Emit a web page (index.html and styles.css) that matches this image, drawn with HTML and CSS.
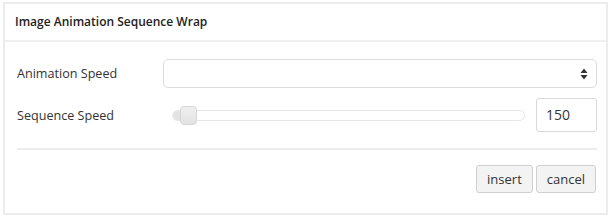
FILE: index.html
```html
<!DOCTYPE html>
<html lang="en">
<head>
    <meta charset="UTF-8">
    <title>Image Animation Sequence Wrap</title>
    <link rel="stylesheet" href="styles.css">
</head>
<body>

    <div class="dialog">
        <div class="dialog-header">Image Animation Sequence Wrap</div>

        <div class="dialog-body">
            <div class="form-row">
                <label class="form-label">Animation Speed</label>
                <div class="select-box">
                    <svg class="select-arrows" width="8" height="12" viewBox="0 0 8 12">
                        <path d="M4 0.5 L7.5 5 L0.5 5 Z" fill="#333"/>
                        <path d="M4 11.5 L7.5 7 L0.5 7 Z" fill="#333"/>
                    </svg>
                </div>
            </div>

            <div class="form-row">
                <label class="form-label">Sequence Speed</label>
                <div class="slider">
                    <div class="slider-track">
                        <div class="slider-fill"></div>
                        <div class="slider-thumb"></div>
                    </div>
                </div>
                <div class="number-box">150</div>
            </div>

            <hr class="divider">

            <div class="button-row">
                <button class="btn">insert</button>
                <button class="btn">cancel</button>
            </div>
        </div>
    </div>

</body>
</html>
```

FILE: styles.css
```css
/* General Styles */
body {
    margin: 0;
    padding: 0;
    background: #ffffff;
    font-family: 'Open Sans', 'Liberation Sans', sans-serif;
    color: #333;
}

.dialog {
    margin: 2px 5px 0 3px;
    width: 601px;
    border: 2px solid #ececec;
    background: #fff;
}

.dialog-header {
    height: 36px;
    line-height: 36px;
    padding-left: 10px;
    font-size: 12px;
    font-weight: 600;
    color: #222;
    border-bottom: 2px solid #f0f0f0;
}

.dialog-body {
    padding: 17px 9px 20px 12px;
}

.form-row {
    display: flex;
    align-items: center;
    margin-bottom: 10px;
}

.form-label {
    width: 146px;
    flex-shrink: 0;
    font-size: 12.6px;
}

.select-box {
    flex: 1;
    height: 27px;
    border: 1px solid #dcdcdc;
    border-radius: 5px;
    display: flex;
    align-items: center;
    justify-content: flex-end;
    padding-right: 8px;
}

.select-arrows {
    display: block;
}

/* Slider */
.slider {
    flex: 1;
    padding: 0 11px 0 9px;
}

.slider-track {
    position: relative;
    height: 9px;
    border: 1px solid #e6e6e6;
    border-radius: 6px;
    background: #fff;
}

.slider-fill {
    width: 16px;
    height: 100%;
    border-radius: 6px 0 0 6px;
    background: #e3e3e3;
}

.slider-thumb {
    position: absolute;
    left: 7px;
    top: -5px;
    width: 15px;
    height: 17px;
    border: 1px solid #d6d6d6;
    border-radius: 4px;
    background: linear-gradient(#f0f0f0, #e2e2e2);
}

.number-box {
    width: 50px;
    height: 32px;
    line-height: 32px;
    padding-left: 9px;
    border: 1px solid #d9d9d9;
    border-radius: 3px;
    font-size: 14px;
}

.divider {
    margin: 16px 0 15px;
    border: none;
    border-top: 2px solid #ececec;
}

.button-row {
    display: flex;
    justify-content: flex-end;
    gap: 3px;
    margin-right: 1px;
}

.btn {
    height: 28px;
    padding: 0 10px;
    font-family: inherit;
    font-size: 13px;
    color: #333;
    background: #f3f3f3;
    border: 1px solid #cfcfcf;
    border-radius: 3px;
}
```
